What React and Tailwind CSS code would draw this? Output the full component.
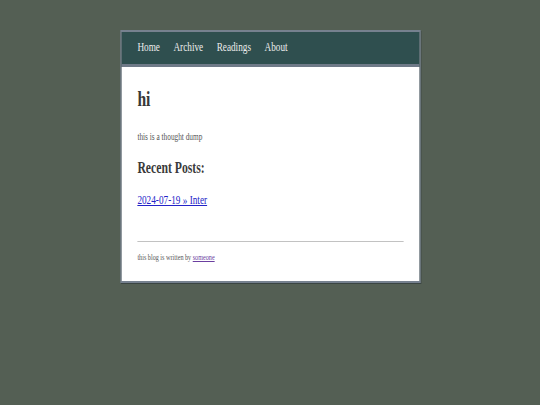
const navLinks = ["Home", "Archive", "Readings", "About"];

export default function App() {
  return (
    <div
      className="min-h-screen w-full bg-[#545f54] pt-[30px]"
      style={{ fontFamily: '"Liberation Serif", "Times New Roman", serif' }}
    >
      <div className="mx-auto w-[423px] origin-center scale-x-[0.71] border-2 border-[#76818f] shadow-[1px_1px_0_#3b4543]">
        {/* Nav */}
        <nav className="h-[32px] bg-[#2f4f4f] border-b-[3px] border-[#6f7a88] box-content px-[22px]">
          <ul className="flex gap-[19px] pt-[6px]">
            {navLinks.map((l) => (
              <li key={l}>
                <a href="#" className="block text-[13px] leading-[17px] text-[#ececec]">
                  {l}
                </a>
              </li>
            ))}
          </ul>
        </nav>

        {/* Content */}
        <main className="bg-white px-[22px] pt-[20px] pb-[19px]">
          <h1 className="text-[22px] leading-[24px] font-bold text-[#383838]">hi</h1>
          <p className="mt-[20px] text-[10.3px] leading-[12px] text-[#555]">this is a thought dump</p>
          <h2 className="mt-[15px] text-[16.5px] leading-[20px] font-bold text-[#3a3a3a]">Recent Posts:</h2>
          <a href="#" className="mt-[14px] block w-fit text-[13px] leading-[16px] text-[#2323c8] underline">
            2024-07-19 » Inter
          </a>

          <hr className="mt-[33px] border-0 border-t border-[#c2c2c2]" />

          <footer className="mt-[10px] text-[8.7px] leading-[10px] text-[#555]">
            this blog is written by{" "}
            <a href="#" className="text-[#6b3fa0] underline">
              someone
            </a>
          </footer>
        </main>
      </div>
    </div>
  );
}
